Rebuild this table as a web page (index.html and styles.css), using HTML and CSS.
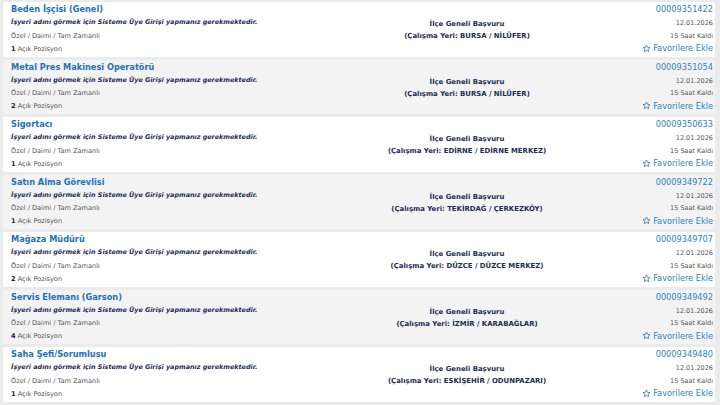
FILE: index.html
```html
<!DOCTYPE html>
<html lang="tr">
<head>
<meta charset="utf-8">
<link rel="stylesheet" href="styles.css">
</head>
<body>
<div class="list">

  <div class="row">
    <div class="left">
      <a class="title">Beden İşçisi (Genel)</a>
      <div class="warn">İşyeri adını görmek için Sisteme Üye Girişi yapmanız gerekmektedir.</div>
      <div class="meta">Özel / Daimi / Tam Zamanlı</div>
      <div class="meta"><b>1</b> Açık Pozisyon</div>
    </div>
    <div class="mid">
      <div>İlçe Geneli Başvuru</div>
      <div>(Çalışma Yeri: BURSA / NİLÜFER)</div>
    </div>
    <div class="right">
      <a class="id">00009351422</a>
      <div class="small date">12.01.2026</div>
      <div class="small">15 Saat Kaldı</div>
      <a class="fav"><svg class="star" viewBox="0 0 24 24"><path d="M12 2.8l2.8 6 6.5.7-4.9 4.4 1.4 6.4L12 17l-5.8 3.3 1.4-6.4-4.9-4.4 6.5-.7z"/></svg>Favorilere Ekle</a>
    </div>
  </div>

  <div class="row">
    <div class="left">
      <a class="title">Metal Pres Makinesi Operatörü</a>
      <div class="warn">İşyeri adını görmek için Sisteme Üye Girişi yapmanız gerekmektedir.</div>
      <div class="meta">Özel / Daimi / Tam Zamanlı</div>
      <div class="meta"><b>2</b> Açık Pozisyon</div>
    </div>
    <div class="mid">
      <div>İlçe Geneli Başvuru</div>
      <div>(Çalışma Yeri: BURSA / NİLÜFER)</div>
    </div>
    <div class="right">
      <a class="id">00009351054</a>
      <div class="small date">12.01.2026</div>
      <div class="small">15 Saat Kaldı</div>
      <a class="fav"><svg class="star" viewBox="0 0 24 24"><path d="M12 2.8l2.8 6 6.5.7-4.9 4.4 1.4 6.4L12 17l-5.8 3.3 1.4-6.4-4.9-4.4 6.5-.7z"/></svg>Favorilere Ekle</a>
    </div>
  </div>

  <div class="row">
    <div class="left">
      <a class="title">Sigortacı</a>
      <div class="warn">İşyeri adını görmek için Sisteme Üye Girişi yapmanız gerekmektedir.</div>
      <div class="meta">Özel / Daimi / Tam Zamanlı</div>
      <div class="meta"><b>1</b> Açık Pozisyon</div>
    </div>
    <div class="mid">
      <div>İlçe Geneli Başvuru</div>
      <div>(Çalışma Yeri: EDİRNE / EDİRNE MERKEZ)</div>
    </div>
    <div class="right">
      <a class="id">00009350633</a>
      <div class="small date">12.01.2026</div>
      <div class="small">15 Saat Kaldı</div>
      <a class="fav"><svg class="star" viewBox="0 0 24 24"><path d="M12 2.8l2.8 6 6.5.7-4.9 4.4 1.4 6.4L12 17l-5.8 3.3 1.4-6.4-4.9-4.4 6.5-.7z"/></svg>Favorilere Ekle</a>
    </div>
  </div>

  <div class="row">
    <div class="left">
      <a class="title">Satın Alma Görevlisi</a>
      <div class="warn">İşyeri adını görmek için Sisteme Üye Girişi yapmanız gerekmektedir.</div>
      <div class="meta">Özel / Daimi / Tam Zamanlı</div>
      <div class="meta"><b>1</b> Açık Pozisyon</div>
    </div>
    <div class="mid">
      <div>İlçe Geneli Başvuru</div>
      <div>(Çalışma Yeri: TEKİRDAĞ / ÇERKEZKÖY)</div>
    </div>
    <div class="right">
      <a class="id">00009349722</a>
      <div class="small date">12.01.2026</div>
      <div class="small">15 Saat Kaldı</div>
      <a class="fav"><svg class="star" viewBox="0 0 24 24"><path d="M12 2.8l2.8 6 6.5.7-4.9 4.4 1.4 6.4L12 17l-5.8 3.3 1.4-6.4-4.9-4.4 6.5-.7z"/></svg>Favorilere Ekle</a>
    </div>
  </div>

  <div class="row">
    <div class="left">
      <a class="title">Mağaza Müdürü</a>
      <div class="warn">İşyeri adını görmek için Sisteme Üye Girişi yapmanız gerekmektedir.</div>
      <div class="meta">Özel / Daimi / Tam Zamanlı</div>
      <div class="meta"><b>2</b> Açık Pozisyon</div>
    </div>
    <div class="mid">
      <div>İlçe Geneli Başvuru</div>
      <div>(Çalışma Yeri: DÜZCE / DÜZCE MERKEZ)</div>
    </div>
    <div class="right">
      <a class="id">00009349707</a>
      <div class="small date">12.01.2026</div>
      <div class="small">15 Saat Kaldı</div>
      <a class="fav"><svg class="star" viewBox="0 0 24 24"><path d="M12 2.8l2.8 6 6.5.7-4.9 4.4 1.4 6.4L12 17l-5.8 3.3 1.4-6.4-4.9-4.4 6.5-.7z"/></svg>Favorilere Ekle</a>
    </div>
  </div>

  <div class="row">
    <div class="left">
      <a class="title">Servis Elemanı (Garson)</a>
      <div class="warn">İşyeri adını görmek için Sisteme Üye Girişi yapmanız gerekmektedir.</div>
      <div class="meta">Özel / Daimi / Tam Zamanlı</div>
      <div class="meta"><b>4</b> Açık Pozisyon</div>
    </div>
    <div class="mid">
      <div>İlçe Geneli Başvuru</div>
      <div>(Çalışma Yeri: İZMİR / KARABAĞLAR)</div>
    </div>
    <div class="right">
      <a class="id">00009349492</a>
      <div class="small date">12.01.2026</div>
      <div class="small">15 Saat Kaldı</div>
      <a class="fav"><svg class="star" viewBox="0 0 24 24"><path d="M12 2.8l2.8 6 6.5.7-4.9 4.4 1.4 6.4L12 17l-5.8 3.3 1.4-6.4-4.9-4.4 6.5-.7z"/></svg>Favorilere Ekle</a>
    </div>
  </div>

  <div class="row">
    <div class="left">
      <a class="title">Saha Şefi/Sorumlusu</a>
      <div class="warn">İşyeri adını görmek için Sisteme Üye Girişi yapmanız gerekmektedir.</div>
      <div class="meta">Özel / Daimi / Tam Zamanlı</div>
      <div class="meta"><b>1</b> Açık Pozisyon</div>
    </div>
    <div class="mid">
      <div>İlçe Geneli Başvuru</div>
      <div>(Çalışma Yeri: ESKİŞEHİR / ODUNPAZARI)</div>
    </div>
    <div class="right">
      <a class="id">00009349480</a>
      <div class="small date">12.01.2026</div>
      <div class="small">15 Saat Kaldı</div>
      <a class="fav"><svg class="star" viewBox="0 0 24 24"><path d="M12 2.8l2.8 6 6.5.7-4.9 4.4 1.4 6.4L12 17l-5.8 3.3 1.4-6.4-4.9-4.4 6.5-.7z"/></svg>Favorilere Ekle</a>
    </div>
  </div>

</div>
</body>
</html>
```

FILE: styles.css
```css
html, body {
  margin: 0;
  padding: 0;
  background: #ebebeb;
  font-family: "DejaVu Sans", Verdana, sans-serif;
}
.list {
  display: flex;
  flex-direction: column;
  gap: 3px;
  padding: 2px 5px 0 3px;
}
.row {
  display: grid;
  grid-template-columns: 1fr 220px 136px;
  height: 54.5px;
  box-sizing: border-box;
  padding: 1px 2px 0 8px;
  border-radius: 2px;
  background: #ffffff;
  overflow: hidden;
}
.row:nth-child(even) {
  background: #f3f3f3;
}
.left {
  display: flex;
  flex-direction: column;
}
.title {
  color: #1f70b6;
  font-weight: bold;
  font-size: 8.2px;
  line-height: 13px;
}
.warn {
  color: #1e2b55;
  font-weight: bold;
  font-style: italic;
  font-size: 6.4px;
  line-height: 13.5px;
}
.meta {
  color: #555;
  font-size: 6.6px;
  line-height: 13px;
}
.meta b {
  color: #222;
}
.mid {
  display: flex;
  flex-direction: column;
  align-items: center;
  padding-top: 15px;
  color: #1e2b55;
  font-weight: bold;
  font-size: 6.9px;
  line-height: 12px;
}
.right {
  display: flex;
  flex-direction: column;
  align-items: flex-end;
}
.id {
  color: #2a84c6;
  font-size: 8.2px;
  line-height: 13px;
}
.small {
  color: #555;
  font-size: 6.5px;
  line-height: 12.5px;
}
.date {
  margin-top: 1px;
}
.fav {
  display: flex;
  align-items: center;
  gap: 2px;
  color: #2a84c6;
  font-size: 8.2px;
  line-height: 12.5px;
}
.star {
  width: 9px;
  height: 9px;
  fill: none;
  stroke: #2a6aa8;
  stroke-width: 2;
  stroke-linejoin: round;
}
```
